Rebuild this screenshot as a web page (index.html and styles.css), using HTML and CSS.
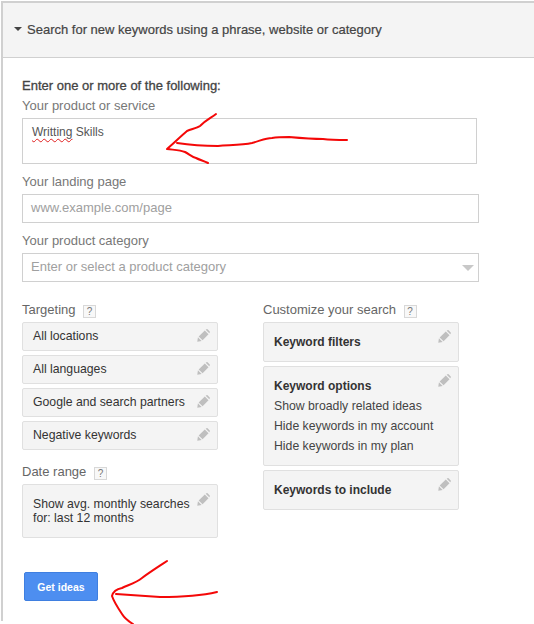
FILE: index.html
```html
<!DOCTYPE html>
<html lang="en">
<head>
  <meta charset="UTF-8" />
  <title>Keyword Planner</title>
  <link rel="stylesheet" href="styles.css">
</head>
<body>
  <svg class="defs" width="0" height="0">
    <symbol id="pencil" viewBox="0 0 14 14">
      <path d="M0.3 13.7 L1 9 L5 13 Z M1.8 8 L8.4 1.6 L12.4 5.6 L6 12.2 Z M9.4 0.8 L10.2 0.2 Q10.8 -0.1 11.4 0.3 L13.7 2.6 Q14.1 3.2 13.7 3.8 L13.2 4.6 Z" fill="#bfbfbf"/>
    </symbol>
  </svg>

  <div class="panel">
    <header class="panel-head">
      <span class="caret"></span>
      <span class="panel-title">Search for new keywords using a phrase, website or category</span>
    </header>

    <section class="panel-body">
      <div class="intro">Enter one or more of the following:</div>

      <label class="field-label first">Your product or service</label>
      <div class="textarea-box"><span class="typo">Writting</span> Skills</div>

      <label class="field-label">Your landing page</label>
      <div class="text-box placeholder">www.example.com/page</div>

      <label class="field-label">Your product category</label>
      <div class="text-box placeholder select-box">
        Enter or select a product category
        <span class="select-arrow"></span>
      </div>

      <div class="columns">
        <div class="col">
          <div class="col-label">Targeting <span class="help">?</span></div>
          <div class="card"><span>All locations</span><svg class="edit"><use href="#pencil"/></svg></div>
          <div class="card"><span>All languages</span><svg class="edit"><use href="#pencil"/></svg></div>
          <div class="card"><span>Google and search partners</span><svg class="edit"><use href="#pencil"/></svg></div>
          <div class="card"><span>Negative keywords</span><svg class="edit"><use href="#pencil"/></svg></div>

          <div class="col-label date-label">Date range <span class="help">?</span></div>
          <div class="card date-card">
            <span>Show avg. monthly searches<br>for: last 12 months</span>
            <svg class="edit"><use href="#pencil"/></svg>
          </div>
        </div>

        <div class="col">
          <div class="col-label">Customize your search <span class="help">?</span></div>
          <div class="card big-card">
            <div class="card-title">Keyword filters</div>
            <svg class="edit"><use href="#pencil"/></svg>
          </div>
          <div class="card big-card">
            <div>
              <div class="card-title">Keyword options</div>
              <div class="card-line">Show broadly related ideas</div>
              <div class="card-line">Hide keywords in my account</div>
              <div class="card-line">Hide keywords in my plan</div>
            </div>
            <svg class="edit"><use href="#pencil"/></svg>
          </div>
          <div class="card big-card">
            <div class="card-title">Keywords to include</div>
            <svg class="edit"><use href="#pencil"/></svg>
          </div>
        </div>
      </div>

      <button class="get-ideas">Get ideas</button>
    </section>
  </div>

  <!-- red marker arrows drawn on top of the screenshot -->
  <svg class="scribble" width="534" height="624" viewBox="0 0 534 624">
    <g fill="none" stroke="#f40808" stroke-width="2" stroke-linecap="round" stroke-linejoin="round">
      <path d="M216 114 C211 118 206 120 200 126 C197 128 192 129 187 131 C180 137 174 143 167 149 C175 150 180 150 185 152 C189 154 192 157 196 158 C200 160 204 161 208 163"/>
      <path d="M177 143 C190 145 205 146 218 146 C232 145 243 145 252 143 C260 141 265 138 272 138 C278 137 283 137 289 137 C300 138 312 139 323 139 C331 140 339 140 347 140"/>
      <path d="M167 561 C158 567 150 572 142 578 C136 583 128 585 122 588 C117 589 113 592 112 596 C114 602 118 608 122 614 C125 619 128 621 133 624"/>
      <path d="M116 594 C130 595 145 596 160 597 C180 597 200 596 217 592"/>
    </g>
  </svg>
</body>
</html>
```

FILE: styles.css
```css
* { box-sizing: border-box; }
body {
  margin: 0;
  width: 534px;
  height: 624px;
  overflow: hidden;
  position: relative;
  background: #fff;
  color: #444;
  font-family: "Liberation Sans", Arial, sans-serif;
  font-size: 13px;
}
.defs { position: absolute; }

.panel {
  margin: 1px 0 0 1px;
  height: 620px;
  border-left: 2px solid #d0d0d0;
  border-top: 2px solid #d0d0d0;
}
.panel-head {
  height: 55px;
  display: flex;
  align-items: center;
  padding: 0 0 2px 11px;
  background: #f4f4f4;
  border-bottom: 1px solid #d0d0d0;
}
.caret {
  width: 0; height: 0;
  border-left: 4px solid transparent;
  border-right: 4px solid transparent;
  border-top: 4px solid #444;
  margin-right: 5px;
}
.panel-title { font-size: 13px; color: #444; -webkit-text-stroke: 0.2px #444; }

.panel-body { padding: 20px 0 0 19px; }
.intro { font-size: 13px; line-height: 16px; color: #444; -webkit-text-stroke: 0.3px #444; }
.field-label {
  display: block;
  font-size: 13px;
  line-height: 16px;
  color: #777;
  margin-top: 10px;
  margin-bottom: 4px;
}
.field-label.first { margin-top: 4px; margin-bottom: 4px; }
.textarea-box {
  width: 455px;
  height: 46px;
  border: 1px solid #d0d0d0;
  padding: 5px 9px;
  line-height: 16px;
  color: #555;
  font-size: 12px;
}
.typo { text-decoration: underline wavy #e02020 1px; text-underline-offset: 2px; }
.text-box {
  width: 457px;
  height: 29px;
  border: 1px solid #d0d0d0;
  padding: 0 8px 2px;
  display: flex;
  align-items: center;
  justify-content: space-between;
  font-size: 13px;
}
.placeholder { color: #a0a0a0; }
.select-arrow {
  width: 0; height: 0;
  border-left: 6px solid transparent;
  border-right: 6px solid transparent;
  border-top: 6px solid #c8c8c8;
  margin: 3px -4px 0 0;
}

.columns { display: flex; gap: 45px; margin-top: 20px; }
.col { width: 196px; }
.col-label {
  font-size: 13px;
  line-height: 16px;
  color: #666;
  margin-bottom: 4px;
  white-space: nowrap;
}
.date-label { margin-top: 14px; }
.help {
  display: inline-block;
  width: 13px;
  height: 13px;
  margin-left: 4px;
  border: 1px solid #d8d8d8;
  background: #f8f8f8;
  color: #777;
  font-size: 10px;
  line-height: 11px;
  text-align: center;
  vertical-align: -1px;
}
.card {
  display: flex;
  justify-content: space-between;
  align-items: center;
  height: 29px;
  margin-bottom: 4px;
  padding: 0 7px 2px 10px;
  background: #f4f4f4;
  border: 1px solid #e0e0e0;
  border-radius: 2px;
  color: #333;
  font-size: 12.25px;
  line-height: 14px;
}
.edit { width: 13px; height: 13px; flex: none; }
.date-card { height: 54px; align-items: flex-start; padding-top: 12px; }
.date-card .edit { margin-top: -4px; }
.big-card {
  height: auto;
  min-height: 40px;
  align-items: flex-start;
  padding: 12px 7px 10px 10px;
}
.big-card .edit { margin-top: -5px; }
.big-card:nth-of-type(3) { padding-bottom: 12px; }
.card-title { font-weight: bold; font-size: 12px; line-height: 14px; color: #333; }
.card-line { font-size: 12.25px; line-height: 14px; margin-top: 6px; color: #444; }

.get-ideas {
  display: block;
  width: 74px;
  height: 29px;
  margin: 30px 0 0 2px;
  background: #4d8ef0;
  border: 1px solid #3f7fe0;
  border-radius: 2px;
  color: #fff;
  font-family: inherit;
  font-size: 10.5px;
  font-weight: bold;
}

.scribble { position: absolute; left: 0; top: 0; pointer-events: none; }
```
